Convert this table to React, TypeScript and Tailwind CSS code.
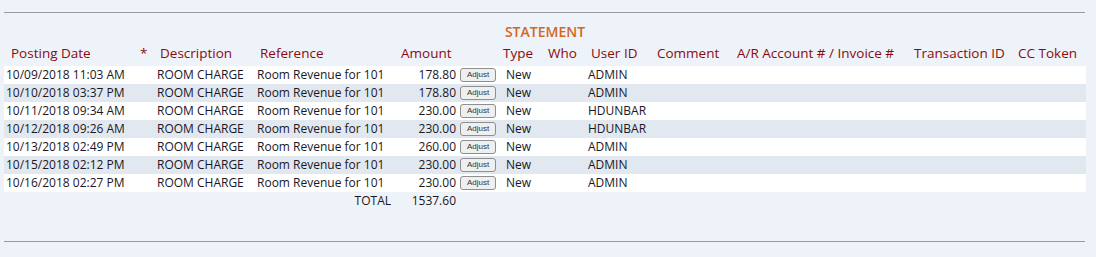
const rows = [
  { date: "10/09/2018 11:03 AM", amount: "178.80", user: "ADMIN" },
  { date: "10/10/2018 03:37 PM", amount: "178.80", user: "ADMIN" },
  { date: "10/11/2018 09:34 AM", amount: "230.00", user: "HDUNBAR" },
  { date: "10/12/2018 09:26 AM", amount: "230.00", user: "HDUNBAR" },
  { date: "10/13/2018 02:49 PM", amount: "260.00", user: "ADMIN" },
  { date: "10/15/2018 02:12 PM", amount: "230.00", user: "ADMIN" },
  { date: "10/16/2018 02:27 PM", amount: "230.00", user: "ADMIN" },
];

const widths = [131, 20, 100, 140, 105, 45, 41, 68, 80, 177, 104, 71];

export default function App() {
  return (
    <div
      className="w-[1096px] h-[257px] bg-[#eef2f9] pt-[12px] text-[#1a1726]"
      style={{ fontFamily: '"Open Sans", "Noto Sans", sans-serif' }}
    >
      <div className="mx-[4px] w-[1081px] border-t border-[#9a9a9a]" />
      <div className="ml-[4px] mt-[11px] w-[1082px] text-center text-[14px] font-semibold leading-[16px] text-[#d2691e]">
        STATEMENT
      </div>
      <table className="ml-[4px] mt-[4px] table-fixed border-collapse text-[12px]">
        <colgroup>
          {widths.map((w, i) => (
            <col key={i} style={{ width: w }} />
          ))}
        </colgroup>
        <thead>
          <tr className="h-[22px] text-left text-[13.5px] leading-[18px] text-[#8b0a0a] [&>th]:pb-[4px] [&>th]:font-medium">
            <th className="pl-[7px]">Posting Date</th>
            <th className="pl-[5px]">*</th>
            <th className="pl-[5px]">Description</th>
            <th className="pl-[5px]">Reference</th>
            <th className="pl-[6px]">Amount</th>
            <th className="pl-[3px]">Type</th>
            <th className="pl-[3px]">Who</th>
            <th className="pl-[5px]">User ID</th>
            <th className="pl-[3px]">Comment</th>
            <th className="pl-[3px] whitespace-nowrap">A/R Account # / Invoice #</th>
            <th className="pl-[3px] whitespace-nowrap">Transaction ID</th>
            <th className="pl-[3px] whitespace-nowrap">CC Token</th>
          </tr>
        </thead>
        <tbody>
          {rows.map((r, i) => (
            <tr key={i} className={`h-[18px] ${i % 2 === 0 ? "bg-white" : "bg-[#e2e8f0]"}`}>
              <td className="pl-[2px] whitespace-nowrap">{r.date}</td>
              <td />
              <td className="pl-[2px] whitespace-nowrap">ROOM CHARGE</td>
              <td className="pl-[2px] whitespace-nowrap">Room Revenue for 101</td>
              <td className="pr-[4px]">
                <div className="flex items-center justify-end gap-[4px]">
                  <span>{r.amount}</span>
                  <button
                    className="h-[14px] w-[36px] rounded-[3px] border border-[#8f8f8f] bg-[#efefef] text-[8px] leading-[12px] text-[#333]"
                    style={{ fontFamily: '"Liberation Sans", Arial, sans-serif' }}
                  >
                    Adjust
                  </button>
                </div>
              </td>
              <td className="pl-[6px]">New</td>
              <td />
              <td className="pl-[2px]">{r.user}</td>
              <td />
              <td />
              <td />
              <td />
            </tr>
          ))}
          <tr className="h-[18px]">
            <td colSpan={4} className="pr-[4px] text-right">TOTAL</td>
            <td className="pr-[44px] text-right">1537.60</td>
            <td colSpan={7} />
          </tr>
        </tbody>
      </table>
      <div className="mx-[4px] mt-[31px] w-[1081px] border-t border-[#9a9a9a]" />
    </div>
  );
}
